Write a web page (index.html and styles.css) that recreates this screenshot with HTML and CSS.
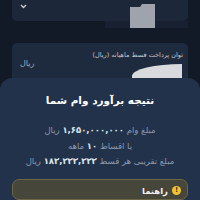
FILE: index.html
```html
<!DOCTYPE html>
<html lang="fa" dir="rtl">
<head>
<meta charset="utf-8">
<link rel="stylesheet" href="styles.css">
</head>
<body>
<div class="page">
  <div class="select-card">
    <span class="chevron">
      <svg width="7" height="5" viewBox="0 0 7 5"><path d="M1 1 L3.5 3.5 L6 1" fill="none" stroke="#c9ced6" stroke-width="1.3"/></svg>
    </span>
    <div class="blob-grey"></div>
  </div>
  <div class="select-shadow"></div>
  <div class="field-card">
    <div class="field-label">توان پرداخت قسط ماهیانه (ریال)</div>
    <div class="field-row">
      <span class="field-unit">ریال</span>
    </div>
    <div class="blob-white"></div>
  </div>
</div>
<div class="sheet">
  <div class="sheet-title">نتیجه برآورد وام شما</div>
  <div class="result">
    <p>مبلغ وام <b>۱,۶۵۰,۰۰۰,۰۰۰</b> ریال</p>
    <p>یا اقساط <b>۱۰</b> ماهه</p>
    <p>مبلغ تقریبی هر قسط <b>۱۸۳,۳۳۳,۳۳۳</b> ریال</p>
  </div>
  <div class="hint">
    <div class="hint-head">
      <span class="hint-icon">!</span>
      <span class="hint-title">راهنما</span>
    </div>
  </div>
</div>
</body>
</html>
```

FILE: styles.css
```css
html, body {
  margin: 0;
  padding: 0;
  background: #121a28;
  width: 200px;
  height: 200px;
  overflow: hidden;
  font-family: "DejaVu Sans", "Noto Sans", sans-serif;
}
.page {
  padding: 0 12px;
  display: flex;
  flex-direction: column;
}
.select-card {
  position: relative;
  height: 21px;
  background: #1c2739;
  border-radius: 0 0 5px 5px;
}
.chevron {
  position: absolute;
  left: 8px;
  top: 4px;
  line-height: 0;
}
.blob-grey {
  position: absolute;
  left: 118px;
  top: 4px;
  width: 25px;
  height: 24px;
  background: #9ea3ad;
  clip-path: polygon(0 12%, 40% 12%, 48% 0, 100% 0, 100% 100%, 0 100%);
  z-index: 2;
}
.select-shadow {
  height: 7px;
  width: 83px;
  align-self: flex-start;
  background: #172131;
}
.field-card {
  position: relative;
  margin-top: 15px;
  height: 40px;
  background: #1e2a3d;
  border-radius: 5px;
  padding: 8px 5px 0 6px;
  box-sizing: border-box;
}
.field-label {
  font-size: 6.5px;
  color: #c3c9d2;
  text-align: right;
  line-height: 8px;
}
.field-row {
  display: flex;
  justify-content: flex-end;
  margin-top: 0;
}
.field-unit {
  font-size: 8px;
  color: #a3abb7;
  padding-left: 2px;
}
.blob-white {
  position: absolute;
  right: 6px;
  top: 21px;
  width: 50px;
  height: 16px;
  background: #d9dadd;
  border-top-left-radius: 50px 12px;
}
.sheet {
  position: fixed;
  left: 0;
  right: 0;
  top: 78px;
  bottom: 0;
  background: #22324b;
  border-radius: 12px 12px 0 0;
  padding: 16px 12px 0 12px;
  display: flex;
  flex-direction: column;
  align-items: stretch;
  z-index: 3;
}
.sheet-title {
  text-align: center;
  color: #ffffff;
  font-weight: bold;
  font-size: 10.5px;
  line-height: 13px;
}
.result {
  margin-top: 16px;
  text-align: center;
  color: #8d99ab;
  font-size: 8.5px;
}
.result p {
  margin: 0;
  line-height: 15.5px;
}
.result b {
  color: #dfe4ea;
  font-weight: bold;
}
.hint {
  margin-top: 9px;
  background: #47463a;
  border: 1px solid #6c6644;
  border-radius: 7px;
  height: 40px;
  padding: 6px 6px 0 6px;
}
.hint-head {
  display: flex;
  align-items: center;
  gap: 4px;
}
.hint-icon {
  width: 9px;
  height: 9px;
  border-radius: 50%;
  background: #f2c230;
  color: #3a3520;
  font-size: 7px;
  font-weight: bold;
  display: flex;
  align-items: center;
  justify-content: center;
  line-height: 1;
}
.hint-title {
  color: #f2f2f2;
  font-size: 8.5px;
  font-weight: bold;
}
```
